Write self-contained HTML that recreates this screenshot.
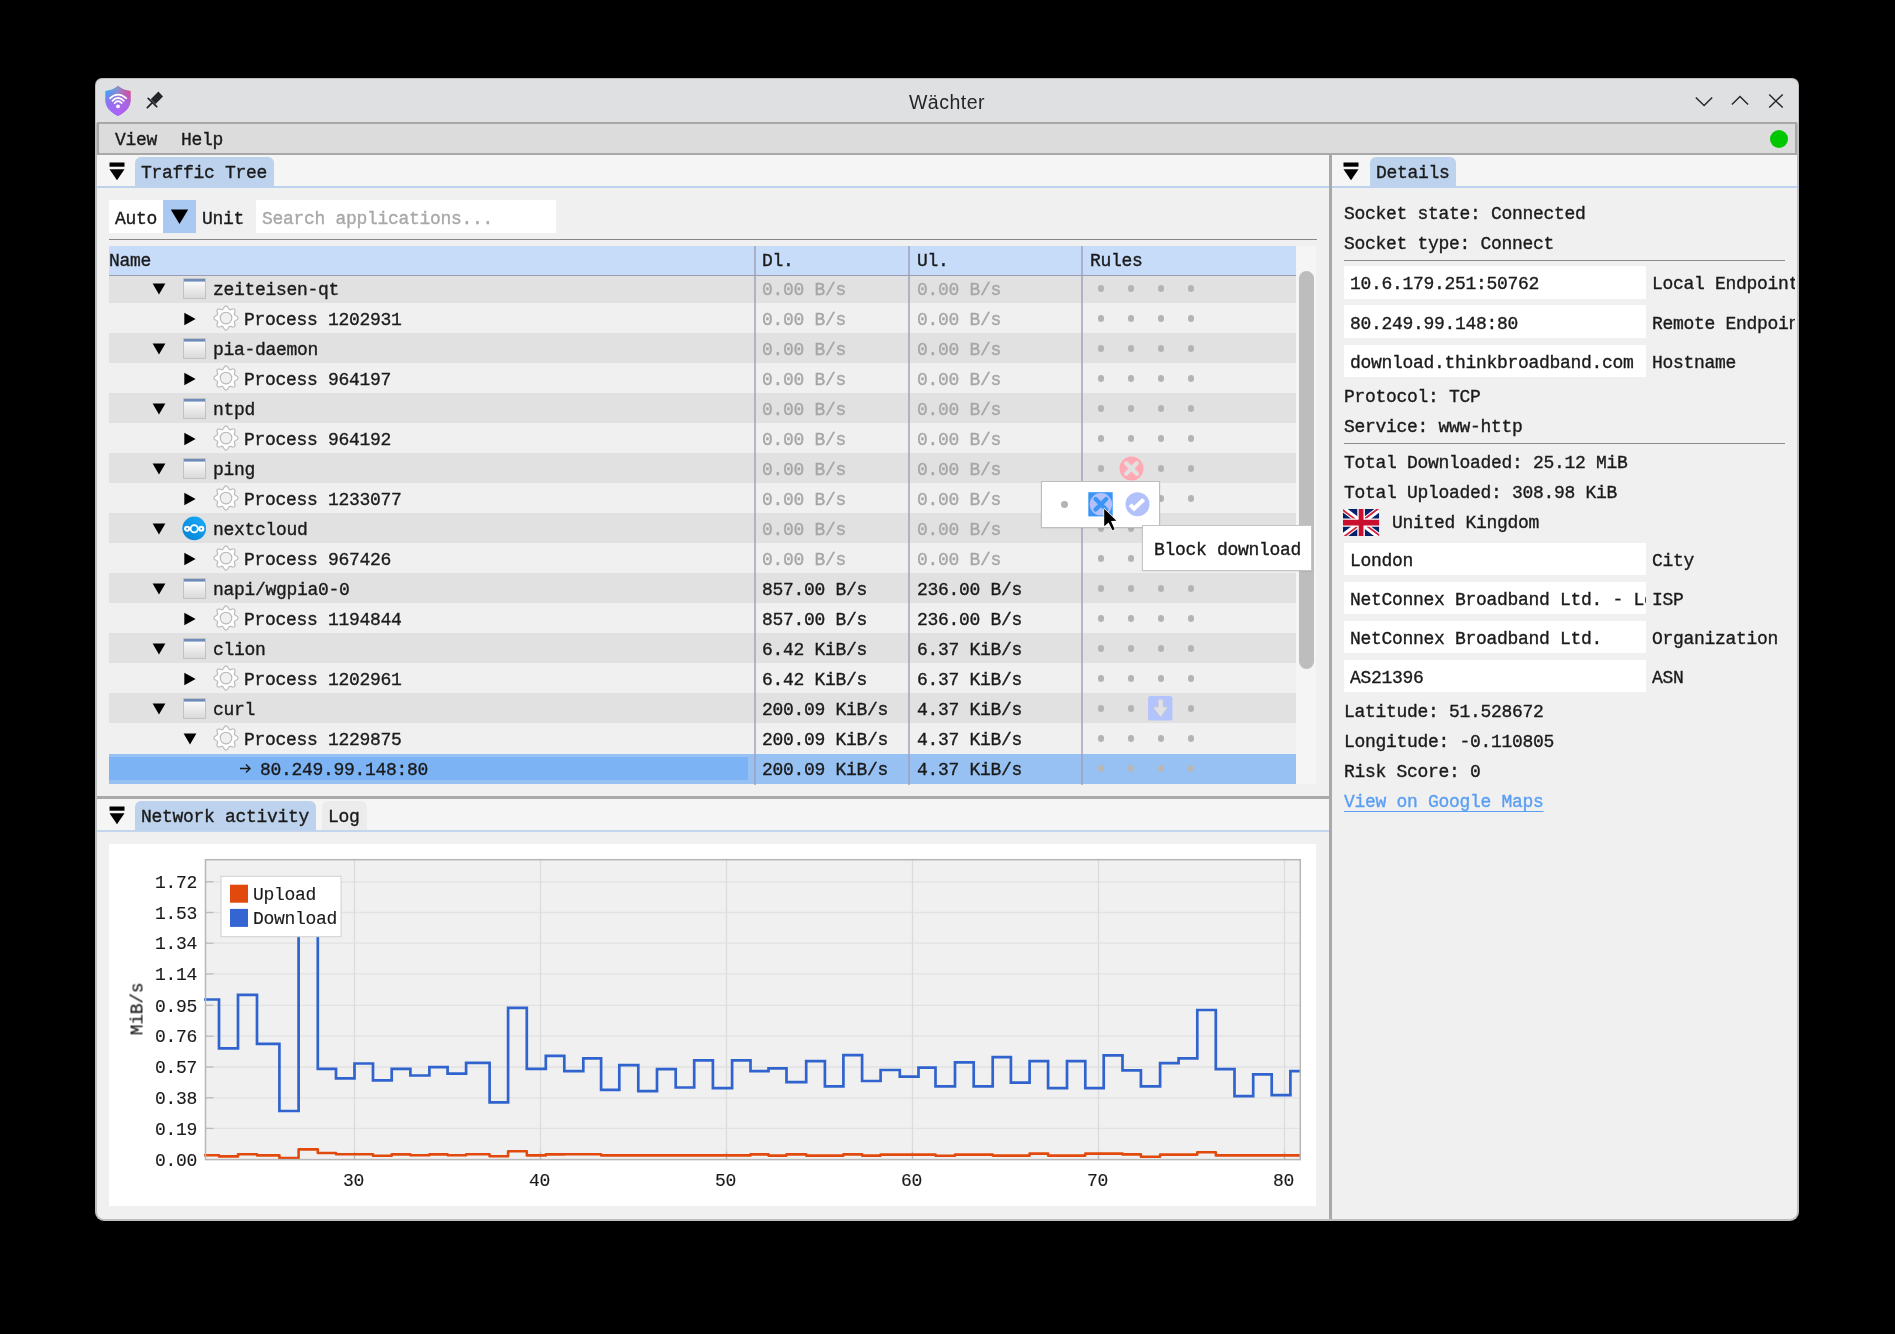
<!DOCTYPE html><html><head><meta charset="utf-8"><title>Wächter</title><style>
html,body{margin:0;padding:0;background:#000;}
body{width:1895px;height:1334px;position:relative;overflow:hidden;font-family:"Liberation Mono",monospace;font-size:18px;letter-spacing:-0.3px;-webkit-text-stroke:0.35px currentColor;color:#1a1a1a;line-height:20px;}
.a{position:absolute;}
.t{position:absolute;white-space:pre;height:20px;line-height:20px;will-change:transform;}
.dim{color:#a6a6a6;}
.ct{-webkit-text-stroke:0.15px currentColor;}
.inp{position:absolute;background:#fff;height:32.6px;}
.dot{position:absolute;width:6.9px;height:6.9px;border-radius:50%;background:#b4b4b4;}
</style></head><body>
<div class="a" style="left:95px;top:78px;width:1704px;height:1143px;background:#bcbec0;border-radius:7px 7px 9px 9px;"></div>
<div class="a" style="left:96px;top:79px;width:1702px;height:44px;background:#dfe0e2;border-radius:6px 6px 0 0;"></div>
<div class="a" style="left:746.5px;top:89.7px;width:400px;text-align:center;font-family:'Liberation Sans',sans-serif;font-size:19.5px;line-height:24px;color:#232629;letter-spacing:0.5px;-webkit-text-stroke:0;will-change:transform;">Wächter</div>
<div class="a" style="left:97px;top:122px;width:1700px;height:33px;background:#a8a8a8;"></div>
<div class="a" style="left:99px;top:124px;width:1696px;height:29.2px;background:#dcdcdc;"></div>
<div class="t" style="left:115px;top:130.35px;">View</div>
<div class="t" style="left:181px;top:130.35px;">Help</div>
<div class="a" style="left:1770px;top:129.8px;width:18px;height:18px;border-radius:50%;background:#00c800;"></div>
<div class="a" style="left:97px;top:155px;width:1700px;height:1064px;background:#f0f0f0;border-radius:0 0 7px 7px;"></div>
<div class="a" style="left:97px;top:155px;width:1232px;height:31px;background:#f5f5f5;"></div>
<div class="a" style="left:97px;top:186px;width:1232px;height:1.5px;background:#bdd2ec;"></div>
<div class="a" style="left:135px;top:156.9px;width:139px;height:30.1px;background:#bdd2ec;border-radius:6px 6px 0 0;"></div>
<div class="t" style="left:141px;top:163.45px;">Traffic Tree</div>
<div class="a" style="left:1329px;top:155px;width:3px;height:1064px;background:#a9a9a9;"></div>
<div class="a" style="left:97px;top:795.5px;width:1232px;height:3px;background:#a9a9a9;"></div>
<div class="a" style="left:109px;top:200px;width:54px;height:33px;background:#fff;"></div>
<div class="a" style="left:163px;top:200px;width:33px;height:33px;background:#a9c9f3;"></div>
<svg class="a" style="left:170px;top:208px" width="19" height="17" viewBox="0 0 19 17"><path d="M0.8 1.5 L18.2 1.5 L9.5 16 Z" fill="#000"/></svg>
<div class="t" style="left:115px;top:208.75px;">Auto</div>
<div class="t" style="left:202px;top:208.75px;">Unit</div>
<div class="a" style="left:256px;top:200px;width:300px;height:33px;background:#fff;"></div>
<div class="t" style="left:262px;top:208.75px;color:#a8a8a8;">Search applications...</div>
<div class="a" style="left:109px;top:239px;width:1208px;height:1.4px;background:#868686;"></div>
<div class="a" style="left:1296px;top:246px;width:20px;height:538px;background:#f5f5f5;"></div>
<div class="a" style="left:1299px;top:271px;width:15px;height:398px;background:#bdbdbd;border-radius:7.5px;"></div>
<svg width="0" height="0" style="position:absolute"><defs><linearGradient id="wg" x1="0" y1="0" x2="0" y2="1"><stop offset="0" stop-color="#ffffff"/><stop offset="1" stop-color="#d9d9d9"/></linearGradient><linearGradient id="ncg" x1="0.85" y1="0.1" x2="0.15" y2="0.9"><stop offset="0" stop-color="#1ba7f6"/><stop offset="1" stop-color="#0587d8"/></linearGradient></defs></svg>
<svg width="0" height="0" style="position:absolute"><defs><symbol id="gear" viewBox="-0.8 -0.8 26 26"><path d="M12.2 0.1 L13.1 0.4 L13.9 1.3 L14.6 2.3 L15.1 3.3 L15.7 3.8 L16.5 3.8 L17.5 3.6 L18.7 3.2 L19.9 3.2 L20.8 3.6 L21.2 4.5 L21.2 5.7 L20.8 6.9 L20.6 7.9 L20.6 8.7 L21.1 9.3 L22.1 9.8 L23.1 10.5 L24.0 11.3 L24.3 12.2 L24.0 13.1 L23.1 13.9 L22.1 14.6 L21.1 15.1 L20.6 15.7 L20.6 16.5 L20.8 17.5 L21.2 18.7 L21.2 19.9 L20.8 20.8 L19.9 21.2 L18.7 21.2 L17.5 20.8 L16.5 20.6 L15.7 20.6 L15.1 21.1 L14.6 22.1 L13.9 23.1 L13.1 24.0 L12.2 24.3 L11.3 24.0 L10.5 23.1 L9.8 22.1 L9.3 21.1 L8.7 20.6 L7.9 20.6 L6.9 20.8 L5.7 21.2 L4.5 21.2 L3.6 20.8 L3.2 19.9 L3.2 18.7 L3.6 17.5 L3.8 16.5 L3.8 15.7 L3.3 15.1 L2.3 14.6 L1.3 13.9 L0.4 13.1 L0.1 12.2 L0.4 11.3 L1.3 10.5 L2.3 9.8 L3.3 9.3 L3.8 8.7 L3.8 7.9 L3.6 6.9 L3.2 5.7 L3.2 4.5 L3.6 3.6 L4.5 3.2 L5.7 3.2 L6.9 3.6 L7.9 3.8 L8.7 3.8 L9.3 3.3 L9.8 2.3 L10.5 1.3 L11.3 0.4 Z" fill="#fff" stroke="#bababa" stroke-width="1.15" stroke-linejoin="round"/><circle cx="12.2" cy="12.2" r="5.8" fill="#f0f0f0" stroke="#b8b8b8" stroke-width="1.15"/></symbol></defs></svg>
<div class="a" style="left:109px;top:246px;width:1187px;height:29px;background:#c7dcf8;"></div>
<div class="a" style="left:109px;top:274.8px;width:1187px;height:1.8px;background:#9b9cb3;"></div>
<div class="a" style="left:109px;top:276px;width:1187px;height:26.8px;background:#e1e1e1;"></div>
<svg class="a" style="left:151.7px;top:282.8px" width="14" height="12" viewBox="0 0 14 12"><path d="M0.6 0.5 L13.4 0.5 L7 11.6 Z" fill="#000"/></svg>
<svg class="a" style="left:183px;top:277.9px" width="23" height="21" viewBox="0 0 23 21"><rect x="0.5" y="0.5" width="22" height="20" fill="url(#wg)" stroke="#c2c2c2" stroke-width="1"/><rect x="1" y="1" width="21" height="2.6" fill="#6d8cba"/></svg>
<div class="t" style="left:213px;top:280.35px;">zeiteisen-qt</div>
<div class="t dim" style="left:762px;top:280.35px;">0.00 B/s</div>
<div class="t dim" style="left:916.5px;top:280.35px;">0.00 B/s</div>
<div class="dot" style="left:1097.55px;top:285.45px;background:#b4b4b4"></div>
<div class="dot" style="left:1127.55px;top:285.45px;background:#b4b4b4"></div>
<div class="dot" style="left:1157.55px;top:285.45px;background:#b4b4b4"></div>
<div class="dot" style="left:1187.55px;top:285.45px;background:#b4b4b4"></div>
<svg class="a" style="left:184.4px;top:312.0px" width="12" height="14" viewBox="0 0 12 14"><path d="M0.3 0.8 L0.3 13.2 L11.6 7 Z" fill="#000"/></svg>
<svg class="a" style="left:213.00px;top:304.95px" width="26" height="26"><use href="#gear"/></svg>
<div class="t" style="left:243.7px;top:310.35px;">Process 1202931</div>
<div class="t dim" style="left:762px;top:310.35px;">0.00 B/s</div>
<div class="t dim" style="left:916.5px;top:310.35px;">0.00 B/s</div>
<div class="dot" style="left:1097.55px;top:315.45px;background:#b4b4b4"></div>
<div class="dot" style="left:1127.55px;top:315.45px;background:#b4b4b4"></div>
<div class="dot" style="left:1157.55px;top:315.45px;background:#b4b4b4"></div>
<div class="dot" style="left:1187.55px;top:315.45px;background:#b4b4b4"></div>
<div class="a" style="left:109px;top:333.4px;width:1187px;height:29.4px;background:#e1e1e1;"></div>
<svg class="a" style="left:151.7px;top:342.8px" width="14" height="12" viewBox="0 0 14 12"><path d="M0.6 0.5 L13.4 0.5 L7 11.6 Z" fill="#000"/></svg>
<svg class="a" style="left:183px;top:337.9px" width="23" height="21" viewBox="0 0 23 21"><rect x="0.5" y="0.5" width="22" height="20" fill="url(#wg)" stroke="#c2c2c2" stroke-width="1"/><rect x="1" y="1" width="21" height="2.6" fill="#6d8cba"/></svg>
<div class="t" style="left:213px;top:340.35px;">pia-daemon</div>
<div class="t dim" style="left:762px;top:340.35px;">0.00 B/s</div>
<div class="t dim" style="left:916.5px;top:340.35px;">0.00 B/s</div>
<div class="dot" style="left:1097.55px;top:345.45px;background:#b4b4b4"></div>
<div class="dot" style="left:1127.55px;top:345.45px;background:#b4b4b4"></div>
<div class="dot" style="left:1157.55px;top:345.45px;background:#b4b4b4"></div>
<div class="dot" style="left:1187.55px;top:345.45px;background:#b4b4b4"></div>
<svg class="a" style="left:184.4px;top:372.0px" width="12" height="14" viewBox="0 0 12 14"><path d="M0.3 0.8 L0.3 13.2 L11.6 7 Z" fill="#000"/></svg>
<svg class="a" style="left:213.00px;top:364.95px" width="26" height="26"><use href="#gear"/></svg>
<div class="t" style="left:243.7px;top:370.35px;">Process 964197</div>
<div class="t dim" style="left:762px;top:370.35px;">0.00 B/s</div>
<div class="t dim" style="left:916.5px;top:370.35px;">0.00 B/s</div>
<div class="dot" style="left:1097.55px;top:375.45px;background:#b4b4b4"></div>
<div class="dot" style="left:1127.55px;top:375.45px;background:#b4b4b4"></div>
<div class="dot" style="left:1157.55px;top:375.45px;background:#b4b4b4"></div>
<div class="dot" style="left:1187.55px;top:375.45px;background:#b4b4b4"></div>
<div class="a" style="left:109px;top:393.4px;width:1187px;height:29.4px;background:#e1e1e1;"></div>
<svg class="a" style="left:151.7px;top:402.8px" width="14" height="12" viewBox="0 0 14 12"><path d="M0.6 0.5 L13.4 0.5 L7 11.6 Z" fill="#000"/></svg>
<svg class="a" style="left:183px;top:397.9px" width="23" height="21" viewBox="0 0 23 21"><rect x="0.5" y="0.5" width="22" height="20" fill="url(#wg)" stroke="#c2c2c2" stroke-width="1"/><rect x="1" y="1" width="21" height="2.6" fill="#6d8cba"/></svg>
<div class="t" style="left:213px;top:400.35px;">ntpd</div>
<div class="t dim" style="left:762px;top:400.35px;">0.00 B/s</div>
<div class="t dim" style="left:916.5px;top:400.35px;">0.00 B/s</div>
<div class="dot" style="left:1097.55px;top:405.45px;background:#b4b4b4"></div>
<div class="dot" style="left:1127.55px;top:405.45px;background:#b4b4b4"></div>
<div class="dot" style="left:1157.55px;top:405.45px;background:#b4b4b4"></div>
<div class="dot" style="left:1187.55px;top:405.45px;background:#b4b4b4"></div>
<svg class="a" style="left:184.4px;top:432.0px" width="12" height="14" viewBox="0 0 12 14"><path d="M0.3 0.8 L0.3 13.2 L11.6 7 Z" fill="#000"/></svg>
<svg class="a" style="left:213.00px;top:424.95px" width="26" height="26"><use href="#gear"/></svg>
<div class="t" style="left:243.7px;top:430.35px;">Process 964192</div>
<div class="t dim" style="left:762px;top:430.35px;">0.00 B/s</div>
<div class="t dim" style="left:916.5px;top:430.35px;">0.00 B/s</div>
<div class="dot" style="left:1097.55px;top:435.45px;background:#b4b4b4"></div>
<div class="dot" style="left:1127.55px;top:435.45px;background:#b4b4b4"></div>
<div class="dot" style="left:1157.55px;top:435.45px;background:#b4b4b4"></div>
<div class="dot" style="left:1187.55px;top:435.45px;background:#b4b4b4"></div>
<div class="a" style="left:109px;top:453.4px;width:1187px;height:29.4px;background:#e1e1e1;"></div>
<svg class="a" style="left:151.7px;top:462.8px" width="14" height="12" viewBox="0 0 14 12"><path d="M0.6 0.5 L13.4 0.5 L7 11.6 Z" fill="#000"/></svg>
<svg class="a" style="left:183px;top:457.9px" width="23" height="21" viewBox="0 0 23 21"><rect x="0.5" y="0.5" width="22" height="20" fill="url(#wg)" stroke="#c2c2c2" stroke-width="1"/><rect x="1" y="1" width="21" height="2.6" fill="#6d8cba"/></svg>
<div class="t" style="left:213px;top:460.35px;">ping</div>
<div class="t dim" style="left:762px;top:460.35px;">0.00 B/s</div>
<div class="t dim" style="left:916.5px;top:460.35px;">0.00 B/s</div>
<div class="dot" style="left:1097.55px;top:465.45px;background:#b4b4b4"></div>
<div class="dot" style="left:1157.55px;top:465.45px;background:#b4b4b4"></div>
<div class="dot" style="left:1187.55px;top:465.45px;background:#b4b4b4"></div>
<svg class="a" style="left:184.4px;top:492.0px" width="12" height="14" viewBox="0 0 12 14"><path d="M0.3 0.8 L0.3 13.2 L11.6 7 Z" fill="#000"/></svg>
<svg class="a" style="left:213.00px;top:484.95px" width="26" height="26"><use href="#gear"/></svg>
<div class="t" style="left:243.7px;top:490.35px;">Process 1233077</div>
<div class="t dim" style="left:762px;top:490.35px;">0.00 B/s</div>
<div class="t dim" style="left:916.5px;top:490.35px;">0.00 B/s</div>
<div class="dot" style="left:1097.55px;top:495.45px;background:#b4b4b4"></div>
<div class="dot" style="left:1127.55px;top:495.45px;background:#b4b4b4"></div>
<div class="dot" style="left:1157.55px;top:495.45px;background:#b4b4b4"></div>
<div class="dot" style="left:1187.55px;top:495.45px;background:#b4b4b4"></div>
<div class="a" style="left:109px;top:513.4px;width:1187px;height:29.4px;background:#e1e1e1;"></div>
<svg class="a" style="left:151.7px;top:522.8px" width="14" height="12" viewBox="0 0 14 12"><path d="M0.6 0.5 L13.4 0.5 L7 11.6 Z" fill="#000"/></svg>
<svg class="a" style="left:182.4px;top:516.0px" width="24" height="25" viewBox="0 0 24 25"><circle cx="12.3" cy="12.3" r="11.9" fill="url(#ncg)"/><circle cx="12.2" cy="12.7" r="3.6" fill="none" stroke="#fff" stroke-width="1.8"/><circle cx="5.1" cy="12.7" r="2.0" fill="none" stroke="#fff" stroke-width="2.1"/><circle cx="19.3" cy="12.7" r="2.0" fill="none" stroke="#fff" stroke-width="2.1"/><path d="M7.3 12.7 H8.2 M16.2 12.7 H17.1" stroke="#fff" stroke-width="1.8"/></svg>
<div class="t" style="left:213px;top:520.35px;">nextcloud</div>
<div class="t dim" style="left:762px;top:520.35px;">0.00 B/s</div>
<div class="t dim" style="left:916.5px;top:520.35px;">0.00 B/s</div>
<div class="dot" style="left:1097.55px;top:525.45px;background:#b4b4b4"></div>
<div class="dot" style="left:1127.55px;top:525.45px;background:#b4b4b4"></div>
<div class="dot" style="left:1157.55px;top:525.45px;background:#b4b4b4"></div>
<div class="dot" style="left:1187.55px;top:525.45px;background:#b4b4b4"></div>
<svg class="a" style="left:184.4px;top:552.0px" width="12" height="14" viewBox="0 0 12 14"><path d="M0.3 0.8 L0.3 13.2 L11.6 7 Z" fill="#000"/></svg>
<svg class="a" style="left:213.00px;top:544.95px" width="26" height="26"><use href="#gear"/></svg>
<div class="t" style="left:243.7px;top:550.35px;">Process 967426</div>
<div class="t dim" style="left:762px;top:550.35px;">0.00 B/s</div>
<div class="t dim" style="left:916.5px;top:550.35px;">0.00 B/s</div>
<div class="dot" style="left:1097.55px;top:555.45px;background:#b4b4b4"></div>
<div class="dot" style="left:1127.55px;top:555.45px;background:#b4b4b4"></div>
<div class="dot" style="left:1157.55px;top:555.45px;background:#b4b4b4"></div>
<div class="dot" style="left:1187.55px;top:555.45px;background:#b4b4b4"></div>
<div class="a" style="left:109px;top:573.4px;width:1187px;height:29.4px;background:#e1e1e1;"></div>
<svg class="a" style="left:151.7px;top:582.8px" width="14" height="12" viewBox="0 0 14 12"><path d="M0.6 0.5 L13.4 0.5 L7 11.6 Z" fill="#000"/></svg>
<svg class="a" style="left:183px;top:577.9px" width="23" height="21" viewBox="0 0 23 21"><rect x="0.5" y="0.5" width="22" height="20" fill="url(#wg)" stroke="#c2c2c2" stroke-width="1"/><rect x="1" y="1" width="21" height="2.6" fill="#6d8cba"/></svg>
<div class="t" style="left:213px;top:580.35px;">napi/wgpia0-0</div>
<div class="t" style="left:762px;top:580.35px;">857.00 B/s</div>
<div class="t" style="left:916.5px;top:580.35px;">236.00 B/s</div>
<div class="dot" style="left:1097.55px;top:585.45px;background:#b4b4b4"></div>
<div class="dot" style="left:1127.55px;top:585.45px;background:#b4b4b4"></div>
<div class="dot" style="left:1157.55px;top:585.45px;background:#b4b4b4"></div>
<div class="dot" style="left:1187.55px;top:585.45px;background:#b4b4b4"></div>
<svg class="a" style="left:184.4px;top:612.0px" width="12" height="14" viewBox="0 0 12 14"><path d="M0.3 0.8 L0.3 13.2 L11.6 7 Z" fill="#000"/></svg>
<svg class="a" style="left:213.00px;top:604.95px" width="26" height="26"><use href="#gear"/></svg>
<div class="t" style="left:243.7px;top:610.35px;">Process 1194844</div>
<div class="t" style="left:762px;top:610.35px;">857.00 B/s</div>
<div class="t" style="left:916.5px;top:610.35px;">236.00 B/s</div>
<div class="dot" style="left:1097.55px;top:615.45px;background:#b4b4b4"></div>
<div class="dot" style="left:1127.55px;top:615.45px;background:#b4b4b4"></div>
<div class="dot" style="left:1157.55px;top:615.45px;background:#b4b4b4"></div>
<div class="dot" style="left:1187.55px;top:615.45px;background:#b4b4b4"></div>
<div class="a" style="left:109px;top:633.4px;width:1187px;height:29.4px;background:#e1e1e1;"></div>
<svg class="a" style="left:151.7px;top:642.8px" width="14" height="12" viewBox="0 0 14 12"><path d="M0.6 0.5 L13.4 0.5 L7 11.6 Z" fill="#000"/></svg>
<svg class="a" style="left:183px;top:637.9px" width="23" height="21" viewBox="0 0 23 21"><rect x="0.5" y="0.5" width="22" height="20" fill="url(#wg)" stroke="#c2c2c2" stroke-width="1"/><rect x="1" y="1" width="21" height="2.6" fill="#6d8cba"/></svg>
<div class="t" style="left:213px;top:640.35px;">clion</div>
<div class="t" style="left:762px;top:640.35px;">6.42 KiB/s</div>
<div class="t" style="left:916.5px;top:640.35px;">6.37 KiB/s</div>
<div class="dot" style="left:1097.55px;top:645.45px;background:#b4b4b4"></div>
<div class="dot" style="left:1127.55px;top:645.45px;background:#b4b4b4"></div>
<div class="dot" style="left:1157.55px;top:645.45px;background:#b4b4b4"></div>
<div class="dot" style="left:1187.55px;top:645.45px;background:#b4b4b4"></div>
<svg class="a" style="left:184.4px;top:672.0px" width="12" height="14" viewBox="0 0 12 14"><path d="M0.3 0.8 L0.3 13.2 L11.6 7 Z" fill="#000"/></svg>
<svg class="a" style="left:213.00px;top:664.95px" width="26" height="26"><use href="#gear"/></svg>
<div class="t" style="left:243.7px;top:670.35px;">Process 1202961</div>
<div class="t" style="left:762px;top:670.35px;">6.42 KiB/s</div>
<div class="t" style="left:916.5px;top:670.35px;">6.37 KiB/s</div>
<div class="dot" style="left:1097.55px;top:675.45px;background:#b4b4b4"></div>
<div class="dot" style="left:1127.55px;top:675.45px;background:#b4b4b4"></div>
<div class="dot" style="left:1157.55px;top:675.45px;background:#b4b4b4"></div>
<div class="dot" style="left:1187.55px;top:675.45px;background:#b4b4b4"></div>
<div class="a" style="left:109px;top:693.4px;width:1187px;height:29.4px;background:#e1e1e1;"></div>
<svg class="a" style="left:151.7px;top:702.8px" width="14" height="12" viewBox="0 0 14 12"><path d="M0.6 0.5 L13.4 0.5 L7 11.6 Z" fill="#000"/></svg>
<svg class="a" style="left:183px;top:697.9px" width="23" height="21" viewBox="0 0 23 21"><rect x="0.5" y="0.5" width="22" height="20" fill="url(#wg)" stroke="#c2c2c2" stroke-width="1"/><rect x="1" y="1" width="21" height="2.6" fill="#6d8cba"/></svg>
<div class="t" style="left:213px;top:700.35px;">curl</div>
<div class="t" style="left:762px;top:700.35px;">200.09 KiB/s</div>
<div class="t" style="left:916.5px;top:700.35px;">4.37 KiB/s</div>
<div class="dot" style="left:1097.55px;top:705.45px;background:#b4b4b4"></div>
<div class="dot" style="left:1127.55px;top:705.45px;background:#b4b4b4"></div>
<div class="dot" style="left:1187.55px;top:705.45px;background:#b4b4b4"></div>
<svg class="a" style="left:183.2px;top:732.8px" width="14" height="12" viewBox="0 0 14 12"><path d="M0.6 0.5 L13.4 0.5 L7 11.6 Z" fill="#000"/></svg>
<svg class="a" style="left:213.00px;top:724.95px" width="26" height="26"><use href="#gear"/></svg>
<div class="t" style="left:243.7px;top:730.35px;">Process 1229875</div>
<div class="t" style="left:762px;top:730.35px;">200.09 KiB/s</div>
<div class="t" style="left:916.5px;top:730.35px;">4.37 KiB/s</div>
<div class="dot" style="left:1097.55px;top:735.45px;background:#b4b4b4"></div>
<div class="dot" style="left:1127.55px;top:735.45px;background:#b4b4b4"></div>
<div class="dot" style="left:1157.55px;top:735.45px;background:#b4b4b4"></div>
<div class="dot" style="left:1187.55px;top:735.45px;background:#b4b4b4"></div>
<div class="a" style="left:109px;top:753.7px;width:1187px;height:30px;background:#97c1f3;"></div>
<div class="a" style="left:109px;top:756.7px;width:639px;height:23.8px;background:#7bb3f5;"></div>
<svg class="a" style="left:239px;top:763.0px" width="13" height="11" viewBox="0 0 13 11"><path d="M1 5.5 H11 M7 1.5 L11 5.5 L7 9.5" fill="none" stroke="#1a1a1a" stroke-width="1.4"/></svg>
<div class="t" style="left:260px;top:760.35px;">80.249.99.148:80</div>
<div class="t" style="left:762px;top:760.35px;">200.09 KiB/s</div>
<div class="t" style="left:916.5px;top:760.35px;">4.37 KiB/s</div>
<div class="dot" style="left:1097.55px;top:765.45px;background:#b7b7b7"></div>
<div class="dot" style="left:1127.55px;top:765.45px;background:#b7b7b7"></div>
<div class="dot" style="left:1157.55px;top:765.45px;background:#b7b7b7"></div>
<div class="dot" style="left:1187.55px;top:765.45px;background:#b7b7b7"></div>
<div class="t" style="left:109px;top:251.45px;">Name</div>
<div class="t" style="left:762px;top:251.45px;">Dl.</div>
<div class="t" style="left:916.5px;top:251.45px;">Ul.</div>
<div class="t" style="left:1089.5px;top:251.45px;">Rules</div>
<div class="a" style="left:754.0px;top:246px;width:2px;height:538.5px;background:rgba(160,160,186,0.72);"></div>
<div class="a" style="left:908.4px;top:246px;width:2px;height:538.5px;background:rgba(160,160,186,0.72);"></div>
<div class="a" style="left:1081.1px;top:246px;width:2px;height:538.5px;background:rgba(160,160,186,0.72);"></div>
<svg class="a" style="left:1118.5px;top:456px" width="25" height="25" viewBox="0 0 25 25"><circle cx="12.5" cy="12.5" r="12" fill="#ffa9b4"/><path d="M7.2 7.2 L17.8 17.8 M17.8 7.2 L7.2 17.8" stroke="#e1e1e1" stroke-width="4.2" stroke-linecap="round"/></svg>
<svg class="a" style="left:1148.1px;top:696.2px" width="25" height="25" viewBox="0 0 25 25"><rect x="0.1" y="0" width="24.3" height="24.5" rx="2.6" fill="#b3c3fd"/><path d="M10.2 4.4 Q10.2 3.3 11.3 3.3 H14 Q15.1 3.3 15.1 4.4 V10.9 H20 L12.6 21.3 L4.8 10.9 H10.2 Z" fill="#e1e1e1" stroke="#c3c6d6" stroke-width="0.7" stroke-linejoin="round"/></svg>
<div class="a" style="left:97px;top:798.5px;width:1232px;height:32px;background:#f5f5f5;"></div>
<div class="a" style="left:97px;top:830.3px;width:1232px;height:1.4px;background:#c3d6ee;"></div>
<div class="a" style="left:135px;top:801.2px;width:181px;height:29.8px;background:#bdd2ec;border-radius:6px 6px 0 0;"></div>
<div class="a" style="left:322px;top:801.2px;width:45px;height:29.1px;background:#ececec;border-radius:6px 6px 0 0;"></div>
<div class="t" style="left:141px;top:807.45px;">Network activity</div>
<div class="t" style="left:328px;top:807.45px;">Log</div>
<div class="a" style="left:109px;top:844px;width:1207px;height:362px;background:#fff;"></div>
<svg class="a" style="left:109px;top:844px" width="1207" height="363" viewBox="0 0 1207 363"><rect x="96.5" y="15.7" width="1094.8" height="299.9" fill="#f0f0f0"/><line x1="96.5" x2="1191.3" y1="37.8" y2="37.8" stroke="#e2e2e2" stroke-width="1.3"/><line x1="96.5" x2="104.5" y1="37.8" y2="37.8" stroke="#bcbcbc" stroke-width="1.3"/><line x1="96.5" x2="1191.3" y1="68.5" y2="68.5" stroke="#e2e2e2" stroke-width="1.3"/><line x1="96.5" x2="104.5" y1="68.5" y2="68.5" stroke="#bcbcbc" stroke-width="1.3"/><line x1="96.5" x2="1191.3" y1="99.2" y2="99.2" stroke="#e2e2e2" stroke-width="1.3"/><line x1="96.5" x2="104.5" y1="99.2" y2="99.2" stroke="#bcbcbc" stroke-width="1.3"/><line x1="96.5" x2="1191.3" y1="129.9" y2="129.9" stroke="#e2e2e2" stroke-width="1.3"/><line x1="96.5" x2="104.5" y1="129.9" y2="129.9" stroke="#bcbcbc" stroke-width="1.3"/><line x1="96.5" x2="1191.3" y1="161.3" y2="161.3" stroke="#e2e2e2" stroke-width="1.3"/><line x1="96.5" x2="104.5" y1="161.3" y2="161.3" stroke="#bcbcbc" stroke-width="1.3"/><line x1="96.5" x2="1191.3" y1="192.2" y2="192.2" stroke="#e2e2e2" stroke-width="1.3"/><line x1="96.5" x2="104.5" y1="192.2" y2="192.2" stroke="#bcbcbc" stroke-width="1.3"/><line x1="96.5" x2="1191.3" y1="223.0" y2="223.0" stroke="#e2e2e2" stroke-width="1.3"/><line x1="96.5" x2="104.5" y1="223.0" y2="223.0" stroke="#bcbcbc" stroke-width="1.3"/><line x1="96.5" x2="1191.3" y1="253.8" y2="253.8" stroke="#e2e2e2" stroke-width="1.3"/><line x1="96.5" x2="104.5" y1="253.8" y2="253.8" stroke="#bcbcbc" stroke-width="1.3"/><line x1="96.5" x2="1191.3" y1="284.4" y2="284.4" stroke="#e2e2e2" stroke-width="1.3"/><line x1="96.5" x2="104.5" y1="284.4" y2="284.4" stroke="#bcbcbc" stroke-width="1.3"/><line x1="245.5" x2="245.5" y1="15.7" y2="315.6" stroke="#dcdcdc" stroke-width="1.3"/><line x1="245.5" x2="245.5" y1="307.6" y2="315.6" stroke="#bcbcbc" stroke-width="1.3"/><line x1="431.5" x2="431.5" y1="15.7" y2="315.6" stroke="#dcdcdc" stroke-width="1.3"/><line x1="431.5" x2="431.5" y1="307.6" y2="315.6" stroke="#bcbcbc" stroke-width="1.3"/><line x1="617.5" x2="617.5" y1="15.7" y2="315.6" stroke="#dcdcdc" stroke-width="1.3"/><line x1="617.5" x2="617.5" y1="307.6" y2="315.6" stroke="#bcbcbc" stroke-width="1.3"/><line x1="803.5" x2="803.5" y1="15.7" y2="315.6" stroke="#dcdcdc" stroke-width="1.3"/><line x1="803.5" x2="803.5" y1="307.6" y2="315.6" stroke="#bcbcbc" stroke-width="1.3"/><line x1="989.5" x2="989.5" y1="15.7" y2="315.6" stroke="#dcdcdc" stroke-width="1.3"/><line x1="989.5" x2="989.5" y1="307.6" y2="315.6" stroke="#bcbcbc" stroke-width="1.3"/><line x1="1175.5" x2="1175.5" y1="15.7" y2="315.6" stroke="#dcdcdc" stroke-width="1.3"/><line x1="1175.5" x2="1175.5" y1="307.6" y2="315.6" stroke="#bcbcbc" stroke-width="1.3"/><clipPath id="pc"><rect x="95.0" y="15.7" width="1096.3" height="301.9"/></clipPath><path d="M95.0 155.5H110.0V204.4H129.0V150.9H148.0V199.9H170.4V267.0H189.6V61.0H208.8V224.8H227.0V234.4H245.5V219.5H264.0V236.3H282.7V224.8H301.4V231.5H320.4V223.1H338.6V229.6H357.1V218.8H380.6V258.4H399.1V163.9H417.8V224.8H436.8V211.9H455.3V227.2H474.3V214.3H492.1V245.9H510.3V221.2H529.3V247.1H548.0V225.1H566.7V243.5H585.2V216.4H603.9V244.2H623.1V216.4H641.5V227.2H659.5V224.3H677.5V238.2H697.2V217.1H715.9V242.3H734.4V211.1H753.1V237.0H771.6V226.0H790.8V232.7H809.5V223.6H826.5V242.3H846.0V218.3H864.7V242.3H883.7V213.1H901.9V238.7H920.6V217.1H939.1V244.2H958.0V217.1H976.3V244.2H994.7V211.4H1013.5V226.3H1031.9V242.3H1051.1V219.1H1069.6V214.3H1088.3V166.0H1106.8V225.1H1125.5V252.2H1144.2V230.3H1162.7V251.2H1181.4V227.2H1192.0" fill="none" stroke="#3063cd" stroke-width="2.7" clip-path="url(#pc)"/><path d="M95.0 311.2H110.0V312.4H129.0V310.3H148.0V311.4H170.4V314.0H189.6V305.4H208.8V309.0H227.0V310.2H245.5V310.2H264.0V311.8H282.7V310.4H301.4V311.2H320.4V310.4H338.6V311.2H357.1V310.2H380.6V312.2H399.1V307.3H417.8V311.4H436.8V310.4H455.3V310.2H492.1V311.4H641.5V310.4H659.5V311.6H677.5V310.4H697.2V311.6H734.4V310.4H753.1V311.6H771.6V310.6H826.5V311.8H846.0V310.6H883.7V311.6H920.6V309.6H939.1V311.6H976.3V309.6H1013.5V310.4H1031.9V312.8H1051.1V310.6H1088.3V308.2H1106.8V311.4H1192.0" fill="none" stroke="#e2490c" stroke-width="2.6" stroke-linejoin="round" clip-path="url(#pc)"/><rect x="96.5" y="15.7" width="1094.8" height="299.9" fill="none" stroke="#b6b6b6" stroke-width="1.5"/><rect x="112" y="32.3" width="120" height="60.4" fill="#fff" stroke="#d0d0d0" stroke-width="1"/><rect x="121" y="40.7" width="18" height="18" fill="#e2490c"/><rect x="121" y="64.9" width="18" height="18" fill="#3465d2"/></svg>
<div class="t ct" style="left:252.5px;top:885.25px;">Upload</div>
<div class="t ct" style="left:252.5px;top:909.25px;">Download</div>
<div class="t ct" style="left:155px;top:873.05px;">1.72</div>
<div class="t ct" style="left:155px;top:903.75px;">1.53</div>
<div class="t ct" style="left:155px;top:934.45px;">1.34</div>
<div class="t ct" style="left:155px;top:965.15px;">1.14</div>
<div class="t ct" style="left:155px;top:996.55px;">0.95</div>
<div class="t ct" style="left:155px;top:1027.45px;">0.76</div>
<div class="t ct" style="left:155px;top:1058.25px;">0.57</div>
<div class="t ct" style="left:155px;top:1089.05px;">0.38</div>
<div class="t ct" style="left:155px;top:1119.65px;">0.19</div>
<div class="t ct" style="left:155px;top:1150.85px;">0.00</div>
<div class="t ct" style="left:343.3px;top:1171.15px;">30</div>
<div class="t ct" style="left:529.3px;top:1171.15px;">40</div>
<div class="t ct" style="left:715.3px;top:1171.15px;">50</div>
<div class="t ct" style="left:901.3px;top:1171.15px;">60</div>
<div class="t ct" style="left:1087.3px;top:1171.15px;">70</div>
<div class="t ct" style="left:1273.3px;top:1171.15px;">80</div>
<div class="t ct" style="left:84.8px;top:998.5px;width:105px;text-align:center;transform:rotate(-90deg);">MiB/s</div>
<div class="a" style="left:1332px;top:155px;width:465px;height:31px;background:#f5f5f5;"></div>
<div class="a" style="left:1332px;top:186px;width:465px;height:1.5px;background:#bdd2ec;"></div>
<div class="a" style="left:1370px;top:156.9px;width:86px;height:30.1px;background:#bdd2ec;border-radius:6px 6px 0 0;"></div>
<div class="t" style="left:1376px;top:163.45px;">Details</div>
<div class="t" style="left:1344px;top:203.95px;">Socket state: Connected</div>
<div class="t" style="left:1344px;top:233.95px;">Socket type: Connect</div>
<div class="a" style="left:1344px;top:259.9px;width:441px;height:1.3px;background:#8c8c8c;"></div>
<div class="inp" style="left:1344px;top:266.3px;width:302px;"></div>
<div class="t" style="left:1350px;top:274.45px;width:295.7px;overflow:hidden;">10.6.179.251:50762</div>
<div class="t" style="left:1652px;top:274.45px;width:142.5px;overflow:hidden;">Local Endpoint</div>
<div class="inp" style="left:1344px;top:305.4px;width:302px;"></div>
<div class="t" style="left:1350px;top:313.55px;width:295.7px;overflow:hidden;">80.249.99.148:80</div>
<div class="t" style="left:1652px;top:313.55px;width:142.5px;overflow:hidden;">Remote Endpoint</div>
<div class="inp" style="left:1344px;top:344.5px;width:302px;"></div>
<div class="t" style="left:1350px;top:352.65px;width:295.7px;overflow:hidden;">download.thinkbroadband.com</div>
<div class="t" style="left:1652px;top:352.65px;width:142.5px;overflow:hidden;">Hostname</div>
<div class="t" style="left:1344px;top:386.75px;">Protocol: TCP</div>
<div class="t" style="left:1344px;top:416.75px;">Service: www-http</div>
<div class="a" style="left:1344px;top:443.1px;width:441px;height:1.3px;background:#8c8c8c;"></div>
<div class="t" style="left:1344px;top:452.75px;">Total Downloaded: 25.12 MiB</div>
<div class="t" style="left:1344px;top:482.75px;">Total Uploaded: 308.98 KiB</div>
<svg class="a" style="left:1343.4px;top:508.9px" width="36.2" height="27.3" viewBox="0 0 60 45" preserveAspectRatio="none"><clipPath id="fc"><rect width="60" height="45"/></clipPath><g clip-path="url(#fc)"><rect width="60" height="45" fill="#012169"/><path d="M0 0 L60 45 M60 0 L0 45" stroke="#fff" stroke-width="9.5"/><g fill="#d21f3c"><polygon points="0.0,0.0 30.0,22.5 28.2,24.9 -1.8,2.4"/><polygon points="30.0,22.5 60.0,45.0 61.8,42.6 31.8,20.1"/><polygon points="30.0,22.5 60.0,0.0 58.2,-2.4 28.2,20.1"/><polygon points="0.0,45.0 30.0,22.5 31.8,24.9 1.8,47.4"/></g><path d="M30 0 V45" stroke="#fff" stroke-width="12.6"/><path d="M0 22.5 H60" stroke="#fff" stroke-width="13.8"/><path d="M30 0 V45" stroke="#c8102e" stroke-width="8"/><path d="M0 22.5 H60" stroke="#c8102e" stroke-width="9.2"/></g></svg>
<div class="t" style="left:1391.5px;top:512.95px;">United Kingdom</div>
<div class="inp" style="left:1344px;top:542.5px;width:302px;"></div>
<div class="t" style="left:1350px;top:550.65px;width:295.7px;overflow:hidden;">London</div>
<div class="t" style="left:1652px;top:550.65px;width:142.5px;overflow:hidden;">City</div>
<div class="inp" style="left:1344px;top:581.6px;width:302px;"></div>
<div class="t" style="left:1350px;top:589.75px;width:295.7px;overflow:hidden;">NetConnex Broadband Ltd. - London</div>
<div class="t" style="left:1652px;top:589.75px;width:142.5px;overflow:hidden;">ISP</div>
<div class="inp" style="left:1344px;top:620.7px;width:302px;"></div>
<div class="t" style="left:1350px;top:628.85px;width:295.7px;overflow:hidden;">NetConnex Broadband Ltd.</div>
<div class="t" style="left:1652px;top:628.85px;width:142.5px;overflow:hidden;">Organization</div>
<div class="inp" style="left:1344px;top:659.8px;width:302px;"></div>
<div class="t" style="left:1350px;top:667.95px;width:295.7px;overflow:hidden;">AS21396</div>
<div class="t" style="left:1652px;top:667.95px;width:142.5px;overflow:hidden;">ASN</div>
<div class="t" style="left:1344px;top:702.45px;">Latitude: 51.528672</div>
<div class="t" style="left:1344px;top:732.45px;">Longitude: -0.110805</div>
<div class="t" style="left:1344px;top:762.45px;">Risk Score: 0</div>
<div class="t" style="left:1344px;top:792.45px;color:#5a9ef3;text-decoration:underline;text-decoration-thickness:1.3px;text-underline-offset:4px;">View on Google Maps</div>
<div class="a" style="left:1041px;top:481px;width:119px;height:47px;background:#fff;border:1px solid #bdbdbd;box-sizing:border-box;box-shadow:0 0.5px 1.5px rgba(0,0,0,0.14);"></div>
<div class="dot" style="left:1061.25px;top:501.15px;"></div>
<svg class="a" style="left:1088px;top:492px" width="25" height="25" viewBox="0 0 25 25"><rect x="0.3" y="0.2" width="24.4" height="24.2" fill="#3a95f6"/><circle cx="12.9" cy="12.3" r="11.2" fill="#b3c1fb"/><path d="M7.6 7 L18.2 17.6 M18.2 7 L7.6 17.6" stroke="#3a95f6" stroke-width="4.3" stroke-linecap="round"/></svg>
<svg class="a" style="left:1124.5px;top:492px" width="25" height="25" viewBox="0 0 25 25"><circle cx="12.5" cy="12.3" r="12" fill="#b3c1fb"/><path d="M5.2 12.8 L9.1 16.6 L18.7 7.4" fill="none" stroke="#fff" stroke-width="4.1"/></svg>
<div class="a" style="left:1141.5px;top:524.5px;width:170px;height:46.5px;background:#fff;border:1px solid #c4c4c4;box-sizing:border-box;box-shadow:0 0.5px 1.5px rgba(0,0,0,0.12);"></div>
<div class="t" style="left:1154px;top:539.65px;">Block download</div>
<svg class="a" style="left:1100px;top:505px" width="22" height="30" viewBox="0 0 22 30"><path d="M4.2 3.7 L16.4 15.7 L11 16 L14.6 24.3 L12.4 25.2 L8.6 17.6 L4.2 21.3 Z" fill="#000" stroke="#fff" stroke-width="1.3" stroke-linejoin="round" paint-order="stroke"/></svg>
<svg class="a" style="left:104px;top:85px" width="28" height="32" viewBox="0 0 28 32"><defs><linearGradient id="sg" x1="0" y1="0" x2="1" y2="0"><stop offset="0.02" stop-color="#27b2f6"/><stop offset="0.5" stop-color="#8b8fcc"/><stop offset="0.98" stop-color="#e2477e"/></linearGradient><linearGradient id="sg2" x1="0" y1="0" x2="0" y2="1"><stop offset="0.1" stop-color="#a45cf2" stop-opacity="0"/><stop offset="0.55" stop-color="#a166f0" stop-opacity="0.8"/><stop offset="1" stop-color="#ad5ffa" stop-opacity="1"/></linearGradient></defs><path d="M14 0.7 C11.2 3.2 6.2 5.5 1.4 6 L1.4 15.5 C1.7 22 6 27 14 30.9 C22 27 26.3 22 26.6 15.5 L26.6 6 C21.8 5.5 16.8 3.2 14 0.7 Z" fill="url(#sg)"/><path d="M14 0.7 C11.2 3.2 6.2 5.5 1.4 6 L1.4 15.5 C1.7 22 6 27 14 30.9 C22 27 26.3 22 26.6 15.5 L26.6 6 C21.8 5.5 16.8 3.2 14 0.7 Z" fill="url(#sg2)"/><g fill="none" stroke="#fff" stroke-width="1.7" stroke-linecap="round"><path d="M5.9 13.3 Q14 5.9 22.3 13.3"/><path d="M8.4 15.8 Q14 9.8 19.8 15.8"/><path d="M10.5 18.2 Q14 14.2 17.7 18.2"/></g><circle cx="14" cy="21.3" r="1.9" fill="#fff"/></svg>
<svg class="a" style="left:140px;top:85px" width="30" height="30" viewBox="0 0 30 30"><path d="M18.4 6.6 L23 11.5 L15.6 19 L10.7 14.3 Z" fill="#232629"/><path d="M8.2 13.4 L16.7 21.6" stroke="#232629" stroke-width="1.7" stroke-linecap="round"/><path d="M12.8 17.2 L6.9 23.1" stroke="#232629" stroke-width="1.8"/></svg>
<svg class="a" style="left:1690px;top:90px" width="100" height="22" viewBox="0 0 100 22"><g fill="none" stroke="#232629" stroke-width="1.4"><path d="M5.8 7.4 L14.1 15.5 L22.2 7.4"/><path d="M41.9 14.5 L50 6.4 L58.1 14.5"/><path d="M79.2 4.4 L92.7 17.6 M92.7 4.4 L79.2 17.6"/></g></svg>
<svg class="a" style="left:108.6px;top:162.2px" width="16" height="19" viewBox="0 0 16 19"><rect x="0.5" y="0.5" width="15" height="4.2" fill="#000"/><path d="M0.5 7.3 L15.5 7.3 L8 18.3 Z" fill="#000"/></svg>
<svg class="a" style="left:1343.4px;top:162.2px" width="16" height="19" viewBox="0 0 16 19"><rect x="0.5" y="0.5" width="15" height="4.2" fill="#000"/><path d="M0.5 7.3 L15.5 7.3 L8 18.3 Z" fill="#000"/></svg>
<svg class="a" style="left:108.6px;top:806px" width="16" height="19" viewBox="0 0 16 19"><rect x="0.5" y="0.5" width="15" height="4.2" fill="#000"/><path d="M0.5 7.3 L15.5 7.3 L8 18.3 Z" fill="#000"/></svg>
</body></html>
